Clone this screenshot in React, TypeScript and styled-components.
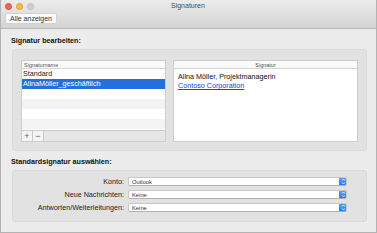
import styled, { createGlobalStyle } from "styled-components";

const GlobalStyle = createGlobalStyle`
  html, body {
    margin: 0;
    padding: 0;
    background: #ececec;
  }
  * {
    box-sizing: border-box;
  }
`;

const signatureRows = [
  { name: "Standard", selected: false },
  { name: "AlinaMöller_geschäftlich", selected: true },
  { name: "", selected: false },
  { name: "", selected: false },
  { name: "", selected: false },
  { name: "", selected: false },
];

const defaults = [
  { label: "Konto:", value: "Outlook" },
  { label: "Neue Nachrichten:", value: "Keine" },
  { label: "Antworten/Weiterleitungen:", value: "Keine" },
];

export default function App() {
  return (
    <>
      <GlobalStyle />
      <Window>
        <TitleBar>
          <TitleRow>
            <Lights>
              <Light $color="#fc605c" $border="#de4a46" />
              <Light $color="#fdbc40" $border="#dea033" />
              <Light $color="#cfcfcf" $border="#bdbdbd" />
            </Lights>
            <WindowTitle>Signaturen</WindowTitle>
          </TitleRow>
          <ToolbarButton>Alle anzeigen</ToolbarButton>
        </TitleBar>

        <Content>
          <SectionTitle>Signatur bearbeiten:</SectionTitle>
          <Panel $pad="10px 8px 8px 8px">
            <ListBox>
              <ColumnHeader $align="left">Signaturname</ColumnHeader>
              {signatureRows.map((row, i) => (
                <ListRow key={i} $selected={row.selected} $striped={i >= 2 && i % 2 === 1}>
                  {row.name}
                </ListRow>
              ))}
              <ListFooter>
                <SquareButton>+</SquareButton>
                <SquareButton>−</SquareButton>
              </ListFooter>
            </ListBox>
            <SignatureBox>
              <ColumnHeader $align="center">Signatur</ColumnHeader>
              <SignatureBody>
                <div>Alina Möller, Projektmanagerin</div>
                <LinkText>Contoso Corporation</LinkText>
              </SignatureBody>
            </SignatureBox>
          </Panel>

          <SectionTitle>Standardsignatur auswählen:</SectionTitle>
          <Panel $pad="6px 8px 9px 8px">
            <FormGrid>
              {defaults.map((d) => (
                <FormRow key={d.label}>
                  <FieldLabel>{d.label}</FieldLabel>
                  <Select>
                    <SelectText>{d.value}</SelectText>
                    <SelectArrow>
                      <svg width="5" height="7" viewBox="0 0 5 7">
                        <path d="M1 2.6 L2.5 1 L4 2.6 M1 4.4 L2.5 6 L4 4.4" stroke="#fff" strokeWidth="0.9" fill="none" />
                      </svg>
                    </SelectArrow>
                  </Select>
                </FormRow>
              ))}
            </FormGrid>
          </Panel>
        </Content>
      </Window>
    </>
  );
}

const Window = styled.div`
  width: 377px;
  height: 233px;
  display: flex;
  flex-direction: column;
  background: #ececec;
  border: 1px solid #b3b3b3;
  border-top: none;
  font-family: "Liberation Sans", Arial, sans-serif;
  color: #1f1f1f;
  overflow: hidden;
`;

const TitleBar = styled.div`
  height: 29px;
  flex-shrink: 0;
  padding: 3px 0 0 3px;
  background: linear-gradient(#ebebeb, #d4d4d4);
  border-bottom: 1px solid #b9b9b9;
  display: flex;
  flex-direction: column;
  gap: 3px;
`;

const TitleRow = styled.div`
  position: relative;
  height: 7px;
  display: flex;
  align-items: center;
`;

const Lights = styled.div`
  display: flex;
  gap: 4px;
  padding-left: 1px;
`;

const Light = styled.span<{ $color: string; $border: string }>`
  width: 7px;
  height: 7px;
  border-radius: 50%;
  background: ${(p) => p.$color};
  border: 0.5px solid ${(p) => p.$border};
`;

const WindowTitle = styled.div`
  position: absolute;
  left: 167px;
  top: -1px;
  font-size: 7px;
  color: #4d4d4d;
`;

const ToolbarButton = styled.div`
  align-self: flex-start;
  margin-left: 1px;
  width: 52px;
  height: 11px;
  background: #fbfbfb;
  border: 1px solid #d2d2d2;
  border-radius: 2px;
  font-size: 7px;
  color: #333;
  display: flex;
  align-items: center;
  justify-content: center;
`;

const Content = styled.div`
  padding: 4px 11px 0 11px;
  display: flex;
  flex-direction: column;
`;

const SectionTitle = styled.div`
  height: 14px;
  margin-left: -1px;
  display: flex;
  align-items: center;
  font-size: 7.2px;
  font-weight: bold;
  color: #111;
  margin-bottom: 2px;
  & + div {
    margin-bottom: 3px;
  }
`;

const Panel = styled.div<{ $pad: string }>`
  width: 355px;
  padding: ${(p) => p.$pad};
  background: #e2e2e2;
  border: 1px solid #dadada;
  border-radius: 3px;
  display: flex;
  gap: 7px;
`;

const ListBox = styled.div`
  width: 145px;
  height: 82px;
  display: flex;
  flex-direction: column;
  background: #fff;
  border: 1px solid #cdcdcd;
`;

const ColumnHeader = styled.div<{ $align: string }>`
  height: 8px;
  flex-shrink: 0;
  padding: 0 2px;
  font-size: 5.5px;
  line-height: 8px;
  color: #555;
  text-align: ${(p) => p.$align};
  background: #fafafa;
  border-bottom: 1px solid #d6d6d6;
`;

const ListRow = styled.div<{ $selected: boolean; $striped: boolean }>`
  height: 10px;
  flex-shrink: 0;
  padding: 0 1px;
  font-size: 7.2px;
  line-height: 10px;
  white-space: nowrap;
  color: ${(p) => (p.$selected ? "#fff" : "#1a1a1a")};
  background: ${(p) => (p.$selected ? "#236fde" : p.$striped ? "#f3f3f3" : "#fff")};
`;

const ListFooter = styled.div`
  margin-top: auto;
  height: 11px;
  display: flex;
  background: #e6e6e6;
  border-top: 1px solid #c9c9c9;
`;

const SquareButton = styled.div`
  width: 11px;
  height: 10px;
  border-right: 1px solid #c9c9c9;
  background: #f4f4f4;
  font-size: 9px;
  line-height: 10px;
  text-align: center;
  color: #666;
`;

const SignatureBox = styled.div`
  flex: 1;
  height: 82px;
  display: flex;
  flex-direction: column;
  background: #fff;
  border: 1px solid #cdcdcd;
`;

const SignatureBody = styled.div`
  padding: 3px 4px;
  font-size: 7.2px;
  line-height: 9px;
  color: #111;
`;

const LinkText = styled.div`
  color: #2040e0;
  text-decoration: underline;
  text-decoration-color: #2040e0;
`;

const FormGrid = styled.div`
  display: flex;
  flex-direction: column;
  gap: 4px;
  width: 100%;
`;

const FormRow = styled.div`
  display: flex;
  align-items: center;
  height: 9px;
`;

const FieldLabel = styled.div`
  width: 107px;
  padding-right: 4px;
  text-align: right;
  font-size: 7.2px;
  white-space: nowrap;
  color: #1a1a1a;
`;

const Select = styled.div`
  width: 219px;
  height: 9px;
  display: flex;
  align-items: center;
  background: #fff;
  border: 1px solid #c6c6c6;
  border-bottom-color: #b0b0b0;
  border-radius: 2px;
  overflow: hidden;
`;

const SelectText = styled.div`
  flex: 1;
  padding-left: 3px;
  font-size: 5.8px;
  color: #333;
`;

const SelectArrow = styled.div`
  width: 8px;
  height: 9px;
  margin-right: -1px;
  background: linear-gradient(#5aa4ff, #1a72f0);
  border-radius: 2px;
  display: flex;
  align-items: center;
  justify-content: center;
`;
